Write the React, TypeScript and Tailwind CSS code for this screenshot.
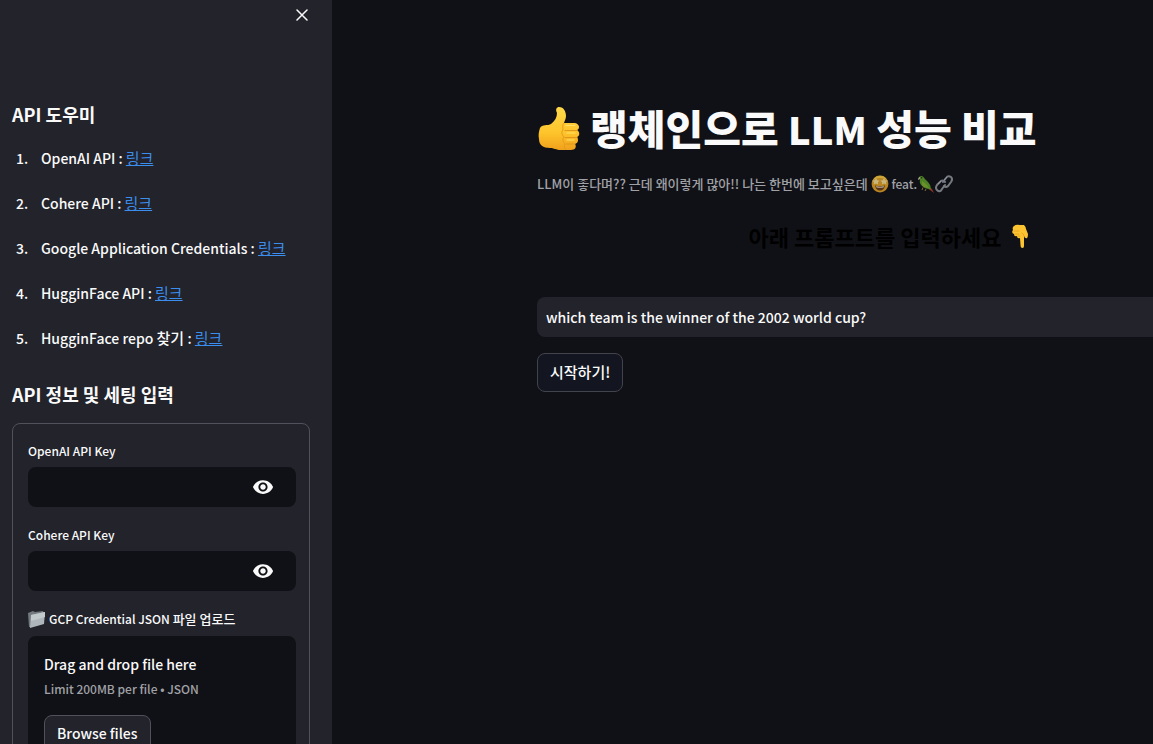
import { useId, useState } from "react";
import type { ReactNode } from "react";
import { MdVisibility, MdVisibilityOff } from "react-icons/md";

function ThumbsUp() {
  return (
    <svg viewBox="0 0 42 46" className="mt-0.5 h-[46px] w-[42px] shrink-0" role="img" aria-label="👍">
      <defs>
        <linearGradient id="thumb" x1="0" y1="0" x2="0" y2="1">
          <stop offset="0" stopColor="#ffd94a" />
          <stop offset="0.6" stopColor="#fec42b" />
          <stop offset="1" stopColor="#f0a01c" />
        </linearGradient>
      </defs>
      <path
        d="M2 22C4 18 10 20 13 18C17 15 19 11 19 7C17 3 19 1 21 1C26 1 28 6 28 10C28 13 26 16 26 17L37 17C42 18 42 23 39 24C42 26 42 30 39 31C41 34 40 37 37 38C39 41 37 44 33 44L23 44C18 44 16 42 12 42C5 42 1 39 1 33C0 29 1 25 2 22Z"
        fill="url(#thumb)"
      />
      <path d="M26 17C24 19 25 22 25 24C23 26 24 29 26 31C24 33 25 36 27 38C26 40 26 42 28 44" fill="none" stroke="#e69a1b" strokeWidth="1" />
      <path d="M27 24.5H39M27 31.5H39M28 38H37" stroke="#e2961a" strokeWidth="1" strokeLinecap="round" />
      <path d="M28 19.5H37M29 27H37M29 34H36" stroke="#ffe26b" strokeWidth="1.2" strokeLinecap="round" />
    </svg>
  );
}

function StarEyes() {
  return (
    <svg viewBox="0 0 18 18" className="inline-block size-[18px] align-[-4px]" role="img" aria-label="🤩">
      <circle cx="9" cy="9" r="8.4" fill="#b98422" />
      <path d="M2 5A8 8 0 0 1 16 5Q9 1 2 5Z" fill="#cda63a" />
      <path d="M5 3L6.2 5.2L8.5 5.6L6.9 7.2L7.2 9.6L5 8.6L2.7 9.6L3 7.2L1.3 5.6L3.8 5.2ZM13 3L14.2 5.2L16.7 5.6L15 7.2L15.3 9.6L13 8.6L10.8 9.6L11.1 7.2L9.5 5.6L11.8 5.2Z" fill="#c9b67c" />
      <path d="M4 10.5Q9 12 14 10.5Q13 15.5 9 15.5Q5 15.5 4 10.5Z" fill="#593214" />
      <path d="M5 11.1Q9 12.2 13 11.1L12.5 12.5Q9 13.2 5.5 12.5Z" fill="#b9b29f" />
    </svg>
  );
}

function Parrot() {
  return (
    <svg viewBox="0 0 18 18" className="inline-block size-[18px] align-[-4px]" role="img" aria-label="🦜">
      <path d="M10 10L15 14L17 18L13 15L9 12Z" fill="#8e3225" />
      <path d="M2 2Q4 0 6.5 2Q7.5 4 11 7Q14 10 14 14Q9 15 5 11Q2 8 3 5Z" fill="#4d8125" />
      <path d="M5 6Q9 8 12 13Q7 13 5 10Z" fill="#6b912a" />
      <path d="M3 2Q1 2 1 5L3 4Z" fill="#a0a08a" />
      <circle cx="4.5" cy="2.8" r="0.7" fill="#18210f" />
      <path d="M6 12.5L5 15M9 14L8 16" stroke="#836a40" strokeWidth="1" />
    </svg>
  );
}

function ChainLink() {
  return (
    <svg viewBox="0 0 18 18" className="inline-block size-[18px] align-[-4px]" role="img" aria-label="🔗">
      <g fill="none" stroke="#757a80" strokeWidth="2" strokeLinecap="round">
        <path d="M8 7L11 3Q13 0 16 2Q18 4 16 7L13 11Q11 13 9 11" />
        <path d="M10 10L7 14Q5 18 2 15Q0 13 2 10L5 7Q7 4 10 7" />
      </g>
      <path d="M9 5L12 2M3 9L6 6" stroke="#a5a9ae" strokeWidth="0.6" />
    </svg>
  );
}

function PointDown() {
  return (
    <svg viewBox="0 0 18 24" className="h-6 w-[18px] shrink-0" role="img" aria-label="👇">
      <path d="M3 2Q5 0 9 1L13 1Q15 3 15 5L17 10Q17 13 16 14Q14 15 13 12L13 22Q13 24 11.5 24Q9.5 24 9.5 21L9 14Q6 15 6 12Q3 13 3 10Q0 9 2 6Q1 3 3 2Z" fill="#fdc431" />
      <path d="M3 7L8 7M4 10L8 10M7 12L9 12M13 12Q13 10 11 9" fill="none" stroke="#e09a1c" strokeWidth="0.8" strokeLinecap="round" />
    </svg>
  );
}

function Folder() {
  return (
    <svg viewBox="0 0 18 18" className="size-[18px] shrink-0" role="img" aria-label="📁">
      <path d="M0 3L5 1L7 2L15 1L16 4L3 17L1 17Z" fill="#73797e" />
      <path d="M3 5L17 2L16 14L2 18Z" fill="#aeb6bb" />
      <path d="M3 5L17 2L17 7L3 11Z" fill="#c2c9cd" />
    </svg>
  );
}

function CloseIcon() {
  return (
    <svg viewBox="0 0 12 12" className="size-3" aria-hidden="true">
      <path d="M1 1L11 11M11 1L1 11" stroke="#fafafa" strokeWidth="1.5" strokeLinecap="round" />
    </svg>
  );
}

const guides = [
  { name: "OpenAI API", href: "#openai" },
  { name: "Cohere API", href: "#cohere" },
  { name: "Google Application Credentials", href: "#google" },
  { name: "HugginFace API", href: "#huggingface" },
  { name: "HugginFace repo", korean: "찾기", href: "#repo" },
];

function SectionTitle({ children }: { children: ReactNode }) {
  return <h2 className="text-[18px] leading-6 font-bold">{children}</h2>;
}

function SecretField({ label }: { label: string }) {
  const id = useId();
  const [visible, setVisible] = useState(false);
  return (
    <div className="flex flex-col gap-1">
      <label htmlFor={id} className="text-[12px] leading-6 font-medium">
        {label}
      </label>
      <div className="flex h-10 items-center rounded-lg bg-[#101116] pr-[22px]">
        <input
          id={id}
          type={visible ? "text" : "password"}
          className="h-full min-w-0 flex-1 bg-transparent px-2 text-[14px] outline-none"
        />
        <button type="button" aria-label={`Show ${label}`} onClick={() => setVisible(!visible)}>
          {visible ? <MdVisibilityOff size={22} /> : <MdVisibility size={22} />}
        </button>
      </div>
    </div>
  );
}

function Sidebar() {
  return (
    <aside className="w-[332px] shrink-0 overflow-hidden bg-[#22232b] pr-[22px] pl-3">
      <div className="flex h-[30px] items-center justify-end pr-0.5">
        <button type="button" aria-label="Close sidebar">
          <CloseIcon />
        </button>
      </div>
      <div className="pt-[72px]">
        <SectionTitle>API 도우미</SectionTitle>
        <ol className="mt-5 flex flex-col gap-[21px] text-[14px] leading-6 font-medium">
          {guides.map((guide, index) => (
            <li key={guide.href} className="flex h-6">
              <span className="w-[29px] shrink-0 pl-1">{index + 1}.</span>
              <span>
                {guide.name} {guide.korean && <span className="text-[15px]">{guide.korean} </span>}:{" "}
                <a href={guide.href} className="text-[15px] font-normal text-[#3b8eed] underline">
                  링크
                </a>
              </span>
            </li>
          ))}
        </ol>
      </div>
      <div className="pt-8">
        <SectionTitle>API 정보 및 세팅 입력</SectionTitle>
        <form className="mt-[17px] flex flex-col gap-4 rounded-lg border border-[#50515a] pt-[15px] pr-[13px] pb-4 pl-[15px]">
          <SecretField label="OpenAI API Key" />
          <SecretField label="Cohere API Key" />
          <div className="flex flex-col gap-[5px]">
            <div className="flex h-6 items-center gap-[3px] text-[12px] leading-6 font-medium">
              <Folder />
              <span>
                GCP Credential JSON <span className="text-[13px]">파일 업로드</span>
              </span>
            </div>
            <div className="rounded-lg bg-[#101116] p-4">
              <p className="text-[14px] leading-6 font-medium">Drag and drop file here</p>
              <p className="mt-[3px] text-[12px] leading-5 font-medium text-[#a0a1a6]">Limit 200MB per file • JSON</p>
              <button
                type="button"
                className="mt-4 flex h-[38px] items-center rounded-lg border border-[#50515a] bg-[#22232b] px-3 pb-0.5 text-[14px] leading-5 font-medium"
              >
                Browse files
              </button>
            </div>
          </div>
        </form>
      </div>
    </aside>
  );
}

export default function App() {
  const [prompt, setPrompt] = useState("which team is the winner of the 2002 world cup?");
  return (
    <div className="flex h-screen overflow-hidden bg-[#101116] font-['Noto_Sans_CJK_KR',sans-serif] text-[#fafafa]">
      <Sidebar />
      <main className="min-w-0 flex-1 overflow-hidden pt-[98px] pl-[205px]">
        <div className="w-[704px]">
          <h1 className="flex h-[60px] items-center gap-2.5 pl-px text-[41px] leading-[60px] font-black">
            <ThumbsUp />
            <span>
              랭체인으로 <span className="text-[38px]">LLM</span> 성능 비교
            </span>
          </h1>
          <p className="mt-3.5 h-6 text-[13px] leading-6 font-medium text-[#a0a1a6]">
            LLM이 좋다며?? 근데 왜이렇게 많아!! 나는 한번에 보고싶은데 <StarEyes /> <span className="text-[12px]">feat.</span>
            <Parrot />
            <ChainLink />
          </p>
          <h2 className="mt-6 flex items-center justify-center gap-2.5 text-[22px] leading-8 font-bold text-black">
            <span>아래 프롬프트를 입력하세요</span>
            <PointDown />
          </h2>
          <input
            type="text"
            aria-label="프롬프트"
            value={prompt}
            onChange={(event) => setPrompt(event.target.value)}
            className="mt-[45px] block h-10 w-full rounded-lg bg-[#22232b] px-[9px] text-[14px] font-medium outline-none"
          />
          <button
            type="button"
            className="mt-4 flex h-[39px] items-center rounded-lg border border-[#42434b] bg-[#131620] px-3 pb-0.5 text-[15px] leading-6 font-medium"
          >
            시작하기!
          </button>
        </div>
      </main>
    </div>
  );
}
